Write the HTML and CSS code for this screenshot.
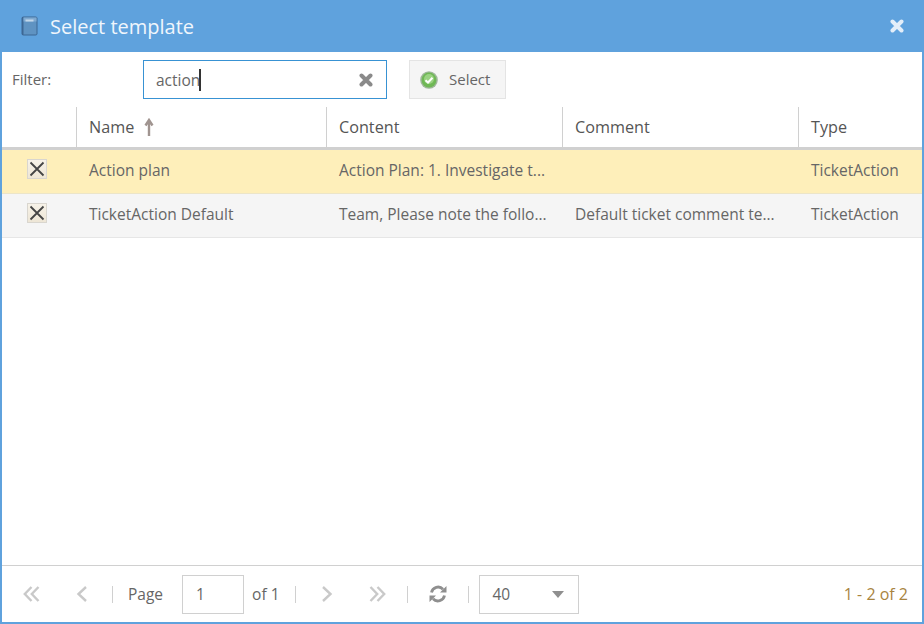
FILE: index.html
```html
<!DOCTYPE html>
<html lang="en">
<head>
<meta charset="utf-8">
<title>Select template</title>
<link rel="stylesheet" href="styles.css">
</head>
<body>
<div class="window">
  <header class="titlebar">
    <svg class="book" width="17" height="20" viewBox="0 0 17 20"><rect x="0.5" y="0.5" width="16" height="19" rx="2" fill="#3d6794"/><rect x="2.5" y="1.5" width="13" height="17" fill="#5f93c2"/><rect x="2.5" y="1.5" width="13" height="4" fill="#7fa9d0"/><rect x="4.5" y="3.5" width="8" height="2" fill="#c3d8ea"/></svg>
    <h1 class="title">Select template</h1>
    <svg class="close" width="14" height="14" viewBox="0 0 14 14"><path d="M2.5 2.5L11.5 11.5M11.5 2.5L2.5 11.5" stroke="#e3eef9" stroke-width="4" stroke-linecap="round"/></svg>
  </header>
  <div class="filterbar">
    <label class="filter-label">Filter:</label>
    <div class="filter-input">
      <span class="filter-text">action</span><span class="caret"></span>
      <svg class="clear" width="14" height="14" viewBox="0 0 14 14"><path d="M2.5 2.5L11.5 11.5M11.5 2.5L2.5 11.5" stroke="#8a8a8a" stroke-width="4" stroke-linecap="round"/></svg>
    </div>
    <button class="select-btn">
      <svg width="18" height="18" viewBox="0 0 18 18"><circle cx="9" cy="9" r="8.8" fill="#9fb79a"/><circle cx="9" cy="9" r="7.4" fill="#6fb855"/><circle cx="9" cy="8" r="5" fill="#9ad282"/><path d="M5.5 9.2L8 11.5L12.5 6.8" fill="none" stroke="#fff" stroke-width="2"/></svg>
      <span class="select-text">Select</span>
    </button>
  </div>
  <div class="grid">
    <div class="row head">
      <div class="cell c0"></div>
      <div class="cell c1">Name<svg class="sort" width="10" height="18" viewBox="0 0 10 18"><path d="M5 18V3M1.5 7.5L5 2L8.5 7.5" fill="none" stroke="#a09490" stroke-width="2.4"/></svg></div>
      <div class="cell c2">Content</div>
      <div class="cell c3">Comment</div>
      <div class="cell c4">Type</div>
    </div>
    <div class="row sel">
      <div class="cell c0"><span class="tick"><svg width="16" height="16" viewBox="0 0 16 16"><path d="M1.5 1.5L14.5 14.5M14.5 1.5L1.5 14.5" stroke="#454545" stroke-width="1.8"/></svg></span></div>
      <div class="cell c1">Action plan</div>
      <div class="cell c2">Action Plan: 1. Investigate t...</div>
      <div class="cell c3"></div>
      <div class="cell c4">TicketAction</div>
    </div>
    <div class="row alt">
      <div class="cell c0"><span class="tick"><svg width="16" height="16" viewBox="0 0 16 16"><path d="M1.5 1.5L14.5 14.5M14.5 1.5L1.5 14.5" stroke="#454545" stroke-width="1.8"/></svg></span></div>
      <div class="cell c1">TicketAction Default</div>
      <div class="cell c2">Team, Please note the follo...</div>
      <div class="cell c3">Default ticket comment te...</div>
      <div class="cell c4">TicketAction</div>
    </div>
  </div>
  <footer class="pager">
    <svg class="pg first" width="18" height="16" viewBox="0 0 18 16"><path d="M8.5 1L1.8 8L8.5 15M15.5 1L8.8 8L15.5 15" fill="none" stroke="#c9c9c9" stroke-width="2.4"/></svg>
    <svg class="pg prev" width="12" height="16" viewBox="0 0 12 16"><path d="M10 1L2.5 8L10 15" fill="none" stroke="#c9c9c9" stroke-width="2.4"/></svg>
    <span class="sep s1"></span>
    <span class="pg-text page-label">Page</span>
    <div class="page-box">1</div>
    <span class="pg-text of">of 1</span>
    <span class="sep s2"></span>
    <svg class="pg next" width="12" height="16" viewBox="0 0 12 16"><path d="M2 1L9.5 8L2 15" fill="none" stroke="#c9c9c9" stroke-width="2.4"/></svg>
    <svg class="pg last" width="18" height="16" viewBox="0 0 18 16"><path d="M2.5 1L9.2 8L2.5 15M9.5 1L16.2 8L9.5 15" fill="none" stroke="#c9c9c9" stroke-width="2.4"/></svg>
    <span class="sep s3"></span>
    <svg class="pg refresh" width="18" height="18" viewBox="0 0 18 18"><path d="M2.5 7.5A6.7 6.7 0 0 1 14 4.2M15.5 10.5A6.7 6.7 0 0 1 4 13.8" fill="none" stroke="#8f8f8f" stroke-width="2.8"/><path d="M17.5 1V7.5H11ZM0.5 17V10.5H7Z" fill="#8f8f8f"/></svg>
    <span class="sep s4"></span>
    <div class="size-box"><span>40</span><i class="arrow"></i></div>
    <span class="count">1 - 2 of 2</span>
  </footer>
</div>
</body>
</html>
```
FILE: styles.css
```css
* { box-sizing: border-box; }
html, body { margin: 0; height: 100%; }
body { font-family: "Open Sans", "Liberation Sans", sans-serif; font-size: 15.5px; color: #666; background: #fff; overflow: hidden; }
.window { width: 924px; height: 624px; display: flex; flex-direction: column; border: 2px solid #5fa2dd; border-top: 0; background: #fff; }
.titlebar { height: 52px; margin: 0 -2px; padding: 0 20px 0 21px; background: #5fa2dd; display: flex; align-items: center; flex: none; }
.book { flex: none; }
.title { margin: 0 0 0 12px; font-size: 20px; font-weight: 400; color: #f0f6fc; flex: 1; }
.close { flex: none; }
.filterbar { height: 55px; flex: none; display: flex; align-items: flex-start; padding: 8px 0 0 10px; }
.filter-label { width: 131px; line-height: 39px; font-size: 15px; }
.filter-input { width: 244px; height: 39px; border: 1px solid #3892d3; display: flex; align-items: center; padding: 0 12px; }
.filter-text { color: #666; }
.caret { width: 2px; height: 22px; background: #333; margin-left: -1px; }
.clear { margin-left: auto; margin-right: 1px; }
.select-btn { margin-left: 22px; width: 97px; height: 39px; border: 1px solid #e4e4e4; background: #f5f5f5; display: flex; align-items: center; padding: 0 0 0 10px; gap: 11px; font: inherit; font-size: 15px; color: #666; }
.select-text { margin-bottom: 2px; }
.grid { flex: 1; min-height: 0; }
.row { display: grid; grid-template-columns: 75px 250px 236px 236px 1fr; }
.head { height: 43px; border-bottom: 3px solid #d0d0d0; color: #555; font-size: 16.2px; }
.head .cell { border-right: 1px solid #d0d0d0; }
.head .c4 { border-right: 0; }
.sel { height: 44px; background: #feefba; border-bottom: 1px solid #ece5c8; }
.alt { height: 44px; background: #f5f5f5; border-bottom: 1px solid #e6e6e6; }
.sel .cell, .alt .cell { padding-bottom: 3px; }
.cell { display: flex; align-items: center; padding: 0 12px; white-space: nowrap; min-width: 0; }
.c0 { justify-content: center; }
.sel .c0, .alt .c0 { padding: 0 5px 3px 0; }
.head .c0 { padding: 0; }
.sort { margin-left: 10px; flex: none; }
.tick { width: 20px; height: 20px; background: linear-gradient(#f7f2e8, #eee6d6); border: 1px solid #d9d6cf; display: flex; align-items: center; justify-content: center; margin-top: -2px; }
.pager { height: 57px; flex: none; border-top: 1px solid #d0d0d0; display: flex; align-items: center; padding-right: 14px; }
.pg { flex: none; }
.first { margin-left: 21px; }
.prev { margin-left: 35px; }
.sep { width: 1px; height: 17px; background: #d0d0d0; flex: none; }
.s1 { margin-left: 24px; }
.page-label { margin-left: 15px; }
.page-box { width: 62px; height: 39px; margin-left: 19px; border: 1px solid #d0d0d0; line-height: 37px; padding-left: 13px; flex: none; }
.of { margin-left: 8px; }
.s2 { margin-left: 15px; }
.next { margin-left: 25px; }
.last { margin-left: 35px; }
.s3 { margin-left: 21px; }
.refresh { margin-left: 21px; }
.s4 { margin-left: 21px; }
.size-box { width: 100px; height: 39px; margin-left: 10px; border: 1px solid #d0d0d0; display: flex; align-items: center; justify-content: space-between; padding: 0 14px 0 13px; flex: none; }
.arrow { width: 0; height: 0; border-left: 6px solid transparent; border-right: 6px solid transparent; border-top: 7px solid #8f8f8f; }
.count { margin-left: auto; color: #a8843f; font-size: 16px; }
```
